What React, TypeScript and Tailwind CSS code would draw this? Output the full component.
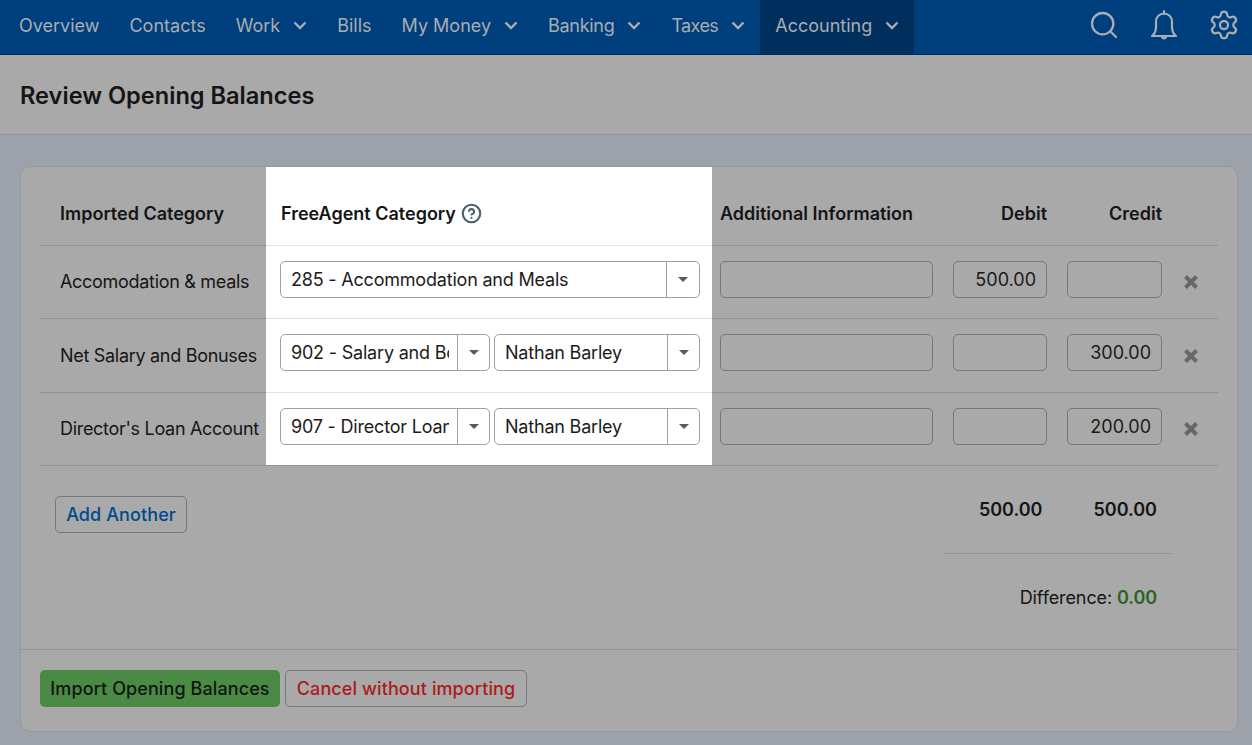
import { CircleHelp, Search, Settings } from 'lucide-react'

const navItems = [
  { label: 'Overview' },
  { label: 'Contacts' },
  { label: 'Work', menu: true },
  { label: 'Bills' },
  { label: 'My Money', menu: true },
  { label: 'Banking', menu: true, tight: 'tracking-[-0.3px]' },
  { label: 'Taxes', menu: true, tight: 'tracking-[-0.6px]' },
  { label: 'Accounting', menu: true, active: true },
]

const rows = [
  { name: 'Accomodation & meals', category: '285 - Accommodation and Meals', debit: '500.00', credit: '', top: 'h-[73px]' },
  { name: 'Net Salary and Bonuses', category: '902 - Salary and Bonuses', person: 'Nathan Barley', debit: '', credit: '300.00', top: 'h-[74px]' },
  { name: "Director's Loan Account", category: '907 - Director Loan Account', person: 'Nathan Barley', debit: '', credit: '200.00', top: 'h-[73px]' },
]

function Select({ value, className, arrow = 'w-[32px]' }: { value: string; className: string; arrow?: string }) {
  return (
    <div className={`flex h-[37px] rounded-[5px] border border-[#9aa2ab] bg-white ${className}`}>
      <div className="flex min-w-0 flex-1 items-center overflow-hidden whitespace-nowrap pl-[10px] pr-[8px] text-[18px] tracking-[-0.2px] text-[#1c1c1c]">
        <span className="block w-full overflow-hidden">{value}</span>
      </div>
      <div className={`flex shrink-0 items-center justify-center border-l border-[#9aa2ab] ${arrow}`}>
        <div className="h-0 w-0 border-x-[5px] border-t-[5px] border-x-transparent border-t-[#555b61]" />
      </div>
    </div>
  )
}

function Input({ value, className = '' }: { value?: string; className?: string }) {
  return (
    <div className={`flex h-[37px] items-center justify-end rounded-[5px] border border-[#73787d] pr-[10px] text-[18px] text-[#1a1a1a] ${className}`}>
      {value}
    </div>
  )
}

export default function App() {
  return (
    <div className="min-h-[745px] bg-[#9da1a9] font-['Inter','Liberation_Sans',sans-serif] text-[#151515]">
      <nav className="flex h-[55px] items-center justify-between border-b border-[#002f5e] bg-[#003f7d] pl-[4px] pr-[12px] text-[18px] text-[#a9adb1]">
        <div className="flex h-full">
          {navItems.map(item => (
            <div
              key={item.label}
              className={`flex items-center gap-[13px] px-[15px] pb-[4px] ${item.active ? 'bg-[#002f5e]' : ''}`}
            >
              <span className={item.tight}>{item.label}</span>
              {item.menu && (
                <svg width="14" height="9" viewBox="0 0 14 9" fill="none" stroke="currentColor" strokeWidth="2.4">
                  <path d="M1.5 1.5 7 7l5.5-5.5" />
                </svg>
              )}
            </div>
          ))}
        </div>
        <div className="mb-[4px] flex items-center gap-[28px]">
          <Search size={32} strokeWidth={1.7} />
          <svg width="32" height="32" viewBox="0 0 32 32" fill="none" stroke="currentColor" strokeWidth="2.2">
            <path d="M4 27c2.500-2 4-5 4-9v-5.500a8 8 0 0 1 16 0V18c0 4 1.500 7 4 9z" strokeLinejoin="round" />
            <path d="M16 2v3" strokeLinecap="round" />
            <path d="M13 28h6c0 1.500-1.500 2.500-3 2.500s-3-1-3-2.500z" fill="currentColor" stroke="none" />
          </svg>
          <Settings size={32} strokeWidth={1.7} />
        </div>
      </nav>

      <header className="flex h-[80px] items-center border-b border-[#93969b] bg-[#a9a9a9] pl-[20px] pt-[3px]">
        <h1 className="text-[23.6px] font-semibold">Review Opening Balances</h1>
      </header>

      <main className="pl-[20px] pr-[14px] pt-[31px]">
        <div className="h-[566px] rounded-[10px] border border-[#959aa1] bg-[#a9a9a9]">
          <div className="px-[19px]">
            <div className="grid h-[79px] grid-cols-[226px_446px_231px_114px_115px_46px] text-[18px] font-semibold">
              <div className="flex items-center border-b border-[#919395] pl-[20px] pt-[14px]">Imported Category</div>
              <div className="flex items-center gap-[5px] border-b border-[#e0e2e6] bg-white pl-[15px] pt-[14px]">
                FreeAgent Category
                <CircleHelp size={21} strokeWidth={2.4} className="text-[#4a6275]" />
              </div>
              <div className="flex items-center border-b border-[#919395] pl-[8px] pt-[14px]">Additional Information</div>
              <div className="flex items-center justify-end border-b border-[#919395] pr-[10px] pt-[14px]">Debit</div>
              <div className="flex items-center justify-end border-b border-[#919395] pr-[10px] pt-[14px]">Credit</div>
              <div className="border-b border-[#919395]" />
            </div>

            {rows.map((row, i) => (
              <div key={row.name} className={`grid grid-cols-[226px_446px_231px_114px_115px_46px] ${row.top}`}>
                <div className="flex items-center whitespace-nowrap border-b border-[#919395] pb-[1px] pl-[20px] text-[18px] tracking-[-0.3px]">{row.name}</div>
                <div className={`flex gap-[4px] border-b bg-white pl-[14px] pr-[12px] pt-[15px] ${i === rows.length - 1 ? 'border-[#919395]' : 'border-[#e0e2e6]'}`}>
                  {row.person ? (
                    <>
                      <Select value={row.category} className="w-[210px]" />
                      <Select value={row.person} className="w-[206px]" />
                    </>
                  ) : (
                    <Select value={row.category} className="w-full" arrow="w-[33px]" />
                  )}
                </div>
                <div className="border-b border-[#919395] pl-[8px] pr-[10px] pt-[15px]"><Input /></div>
                <div className="border-b border-[#919395] pl-[10px] pr-[10px] pt-[15px]"><Input value={row.debit} /></div>
                <div className="border-b border-[#919395] pl-[10px] pr-[10px] pt-[15px]"><Input value={row.credit} /></div>
                <div className="flex items-center justify-center border-b border-[#919395] pr-[8px]">
                  <svg width="16" height="16" viewBox="0 0 16 16" className="text-[#676767]">
                    <path d="M2.500 2.500 13.500 13.500M13.500 2.500 2.500 13.500" stroke="currentColor" strokeWidth="4" />
                  </svg>
                </div>
              </div>
            ))}

            <div className="flex h-[183px] justify-between">
              <div className="pl-[15px] pt-[30px]">
                <button className="h-[37px] w-[132px] rounded-[5px] border border-[#73787d] text-[18px] font-medium tracking-[0.1px] text-[#00498f]">
                  Add Another
                </button>
              </div>
              <div className="mr-[46px] w-[229px] pt-[30px] text-[18px]">
                <div className="flex h-[58px] justify-end gap-[51px] border-b border-[#939393] pr-[15px] font-semibold">
                  <span>500.00</span>
                  <span>500.00</span>
                </div>
                <div className="pr-[15px] pt-[30px] text-right tracking-[-0.1px]">
                  Difference: <span className="font-semibold text-[#2a6420]">0.00</span>
                </div>
              </div>
            </div>
          </div>

          <div className="flex gap-[5px] border-t border-[#939393] px-[19px] pt-[20px] text-[18px] tracking-[0.1px]">
            <button className="h-[37px] w-[240px] rounded-[5px] bg-[#4a8a45] font-medium text-[#101510]">
              Import Opening Balances
            </button>
            <button className="h-[37px] w-[242px] rounded-[5px] border border-[#73787d] font-medium text-[#ad1a1a]">
              Cancel without importing
            </button>
          </div>
        </div>
      </main>
    </div>
  )
}
